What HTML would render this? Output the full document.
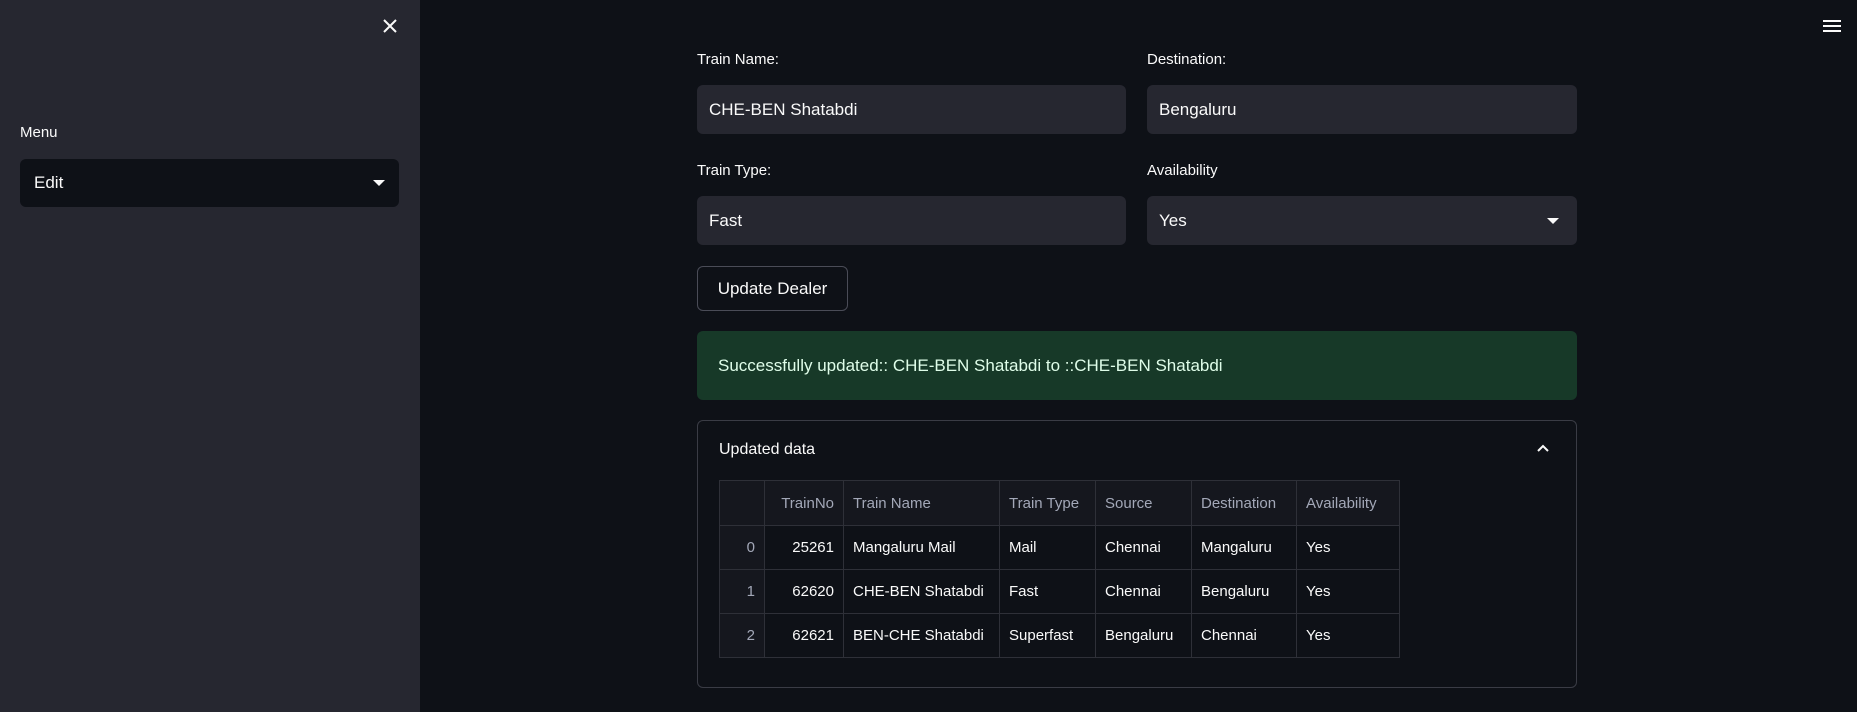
<!DOCTYPE html>
<html><head><meta charset="utf-8"><style>
*{box-sizing:border-box;margin:0;padding:0}
body{width:1857px;height:712px;background:#0e1117;font-family:"Liberation Sans",sans-serif;color:#fafafa;position:relative;overflow:hidden}
.abs{position:absolute}
.side{left:0;top:0;width:420px;height:712px;background:#262730}
.lbl{font-size:15px;color:#fafafa}
.inp{background:#262730;border-radius:6px;font-size:17px;padding-left:12px;display:flex;align-items:center}
.tri{width:0;height:0;border-left:6px solid transparent;border-right:6px solid transparent;border-top:6px solid #fafafa;position:absolute;right:14px;top:50%;margin-top:-3px}
table{border-collapse:collapse;font-size:15px}
td,th{border:1px solid #2e3038;padding:0 9px;height:44px;font-weight:normal;text-align:left;white-space:nowrap}
th{color:#a3a8b8;height:45px;background:#15171e}
.r{text-align:right}
.ix{color:#a3a8b8;text-align:right;background:#15171e}
</style></head><body>
<div class="abs side"></div>
<svg class="abs" style="left:382px;top:18px" width="16" height="16" viewBox="0 0 16 16"><path d="M2 2L14 14M14 2L2 14" stroke="#fafafa" stroke-width="2"/></svg>
<div class="abs lbl" style="left:20px;top:124px">Menu</div>
<div class="abs inp" style="left:20px;top:159px;width:379px;height:48px;background:#0e1117;padding-left:14px">Edit<div class="tri"></div></div>
<svg class="abs" style="left:1822px;top:18px" width="20" height="16" viewBox="0 0 20 16"><path d="M1 3H19M1 8H19M1 13H19" stroke="#fafafa" stroke-width="2"/></svg>

<div class="abs lbl" style="left:697px;top:51px">Train Name:</div>
<div class="abs inp" style="left:697px;top:85px;width:429px;height:49px">CHE-BEN Shatabdi</div>
<div class="abs lbl" style="left:1147px;top:51px">Destination:</div>
<div class="abs inp" style="left:1147px;top:85px;width:430px;height:49px">Bengaluru</div>
<div class="abs lbl" style="left:697px;top:162px">Train Type:</div>
<div class="abs inp" style="left:697px;top:196px;width:429px;height:49px">Fast</div>
<div class="abs lbl" style="left:1147px;top:162px">Availability</div>
<div class="abs inp" style="left:1147px;top:196px;width:430px;height:49px">Yes<div class="tri" style="right:18px"></div></div>
<div class="abs" style="left:697px;top:266px;width:151px;height:45px;border:1px solid #4a4c57;border-radius:6px;font-size:17px;display:flex;align-items:center;justify-content:center">Update Dealer</div>
<div class="abs" style="left:697px;top:331px;width:880px;height:69px;background:#173928;border-radius:6px;color:#dffde9;font-size:17px;padding-left:21px;display:flex;align-items:center">Successfully updated:: CHE-BEN Shatabdi to ::CHE-BEN Shatabdi</div>
<div class="abs" style="left:697px;top:420px;width:880px;height:268px;border:1px solid #3a3c45;border-radius:6px"></div>
<div class="abs" style="left:719px;top:441px;font-size:16px">Updated data</div>
<svg class="abs" style="left:1536px;top:443px" width="14" height="10" viewBox="0 0 14 10"><path d="M2 8L7 3L12 8" stroke="#fafafa" stroke-width="2" fill="none"/></svg>
<table class="abs" style="left:719px;top:480px;width:681px">
<tr><th style="width:45px"></th><th class="r" style="width:79px">TrainNo</th><th style="width:156px">Train Name</th><th style="width:96px">Train Type</th><th style="width:96px">Source</th><th style="width:105px">Destination</th><th>Availability</th></tr>
<tr><td class="ix">0</td><td class="r">25261</td><td>Mangaluru Mail</td><td>Mail</td><td>Chennai</td><td>Mangaluru</td><td>Yes</td></tr>
<tr><td class="ix">1</td><td class="r">62620</td><td>CHE-BEN Shatabdi</td><td>Fast</td><td>Chennai</td><td>Bengaluru</td><td>Yes</td></tr>
<tr><td class="ix">2</td><td class="r">62621</td><td>BEN-CHE Shatabdi</td><td>Superfast</td><td>Bengaluru</td><td>Chennai</td><td>Yes</td></tr>
</table>
</body></html>
